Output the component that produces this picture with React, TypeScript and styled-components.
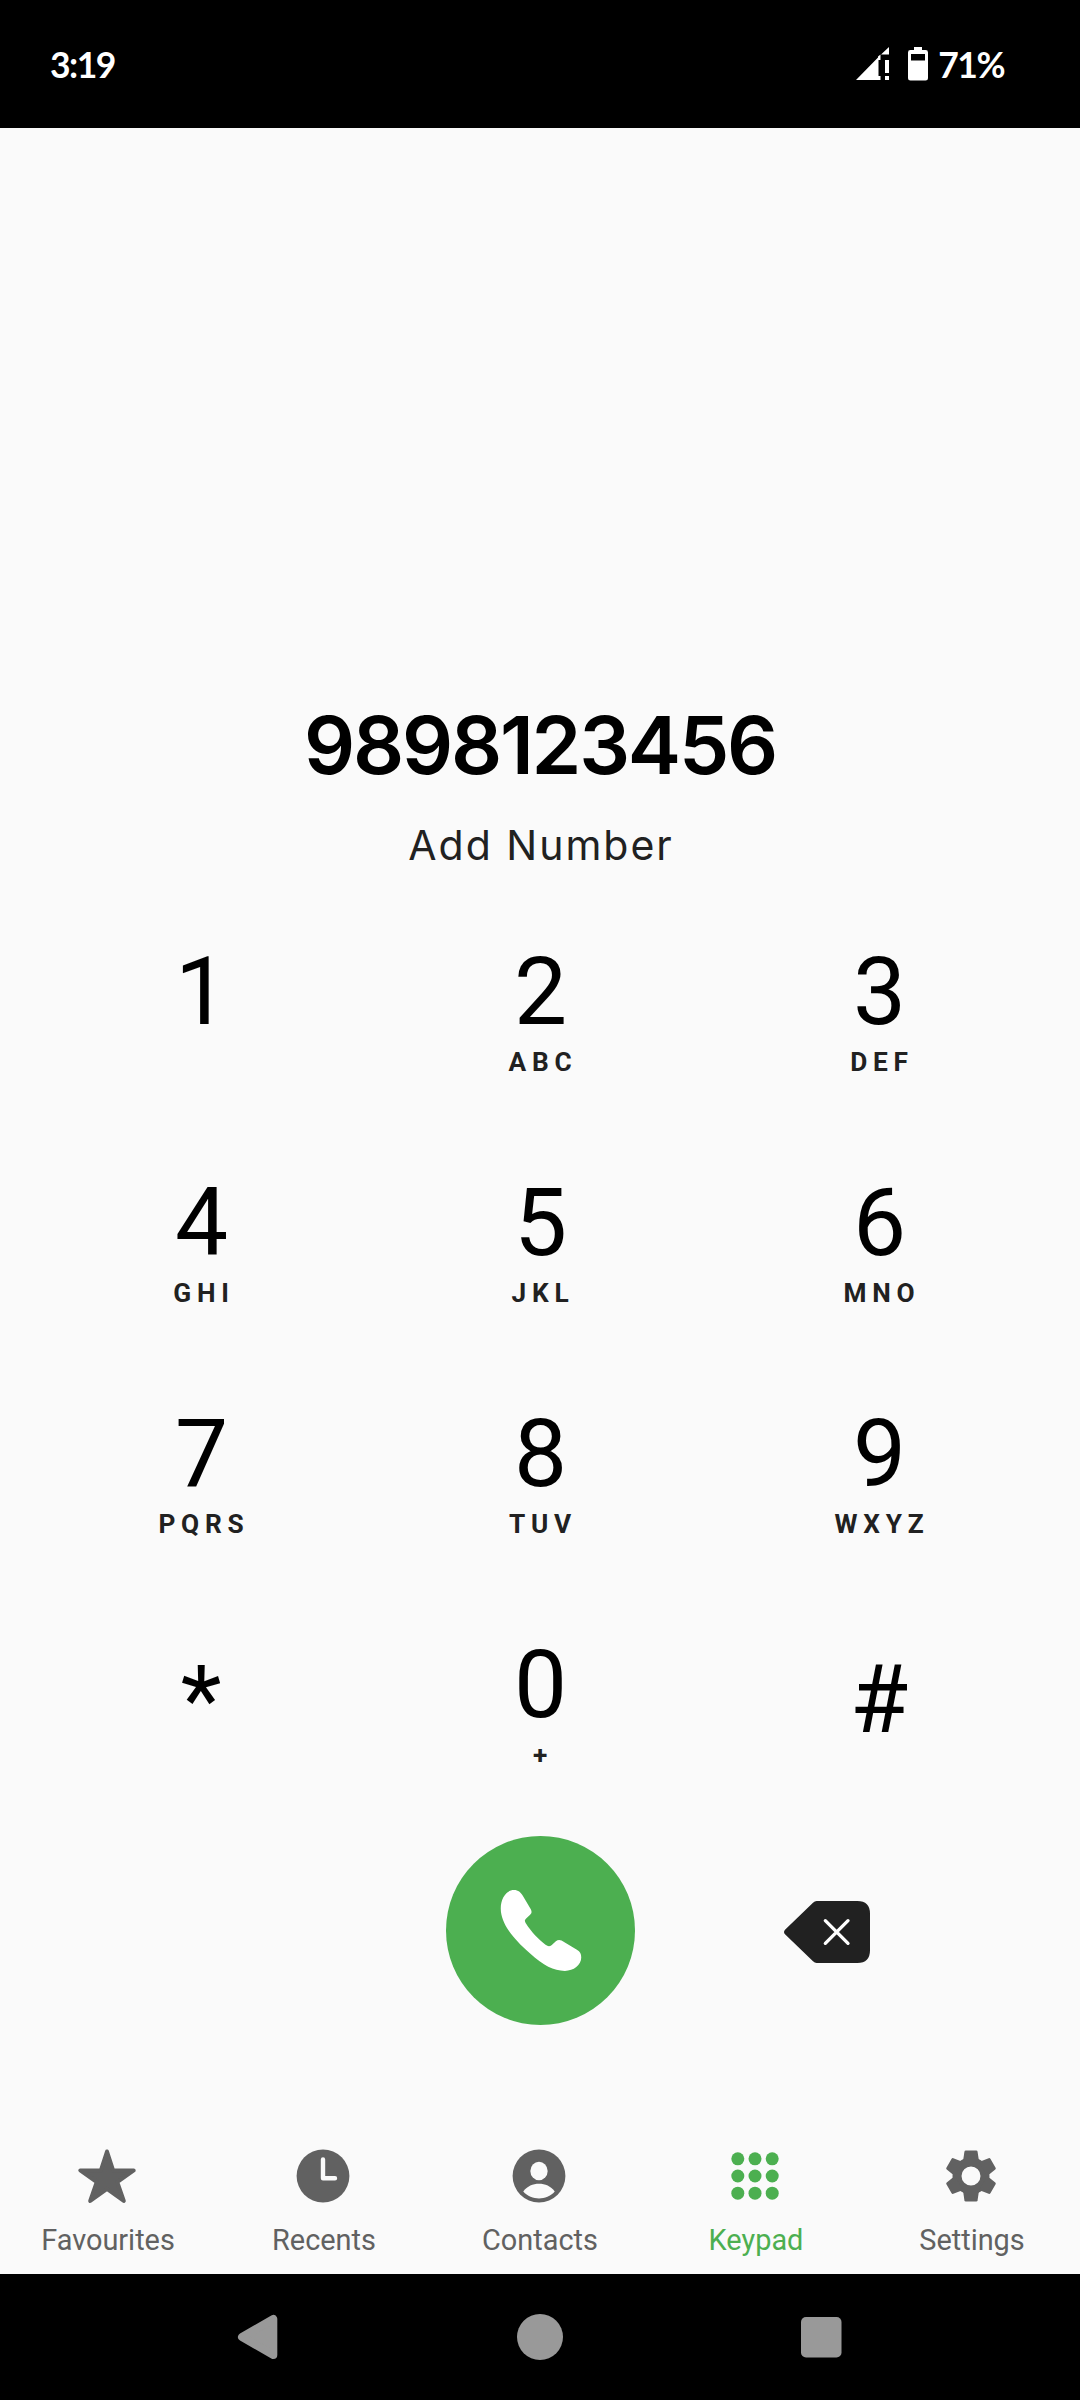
import React from "react";
import styled, { createGlobalStyle } from "styled-components";

const GlobalStyle = createGlobalStyle`
  *, *::before, *::after { box-sizing: border-box; }
  body { margin: 0; background: #fafafa; }
  button { border: 0; padding: 0; background: none; font: inherit; color: inherit; cursor: pointer; }
  svg { display: block; flex: none; }
`;

const Phone = styled.div`
  width: 1080px;
  height: 2400px;
  display: flex;
  flex-direction: column;
  background: #fafafa;
  font-family: Roboto, "Noto Sans", sans-serif;
  overflow: hidden;
`;

const StatusBar = styled.header`
  height: 128px;
  flex: none;
  display: flex;
  align-items: center;
  justify-content: space-between;
  padding: 0 76px 0 50px;
  background: #000;
  color: #fff;
  font-family: Lato, sans-serif;
  font-weight: 700;
  font-size: 35.5px;
  line-height: 44px;
  letter-spacing: -1.5px;
`;

const StatusText = styled.span`
  padding-top: 1px;
`;

const StatusIcons = styled.div`
  display: flex;
  align-items: center;
`;

const SignalIcon = styled.svg`
  margin-right: 19px;
`;

const BatteryIcon = styled.svg`
  margin-right: 10px;
`;

const Dialer = styled.main`
  flex: 1;
  display: flex;
  flex-direction: column;
`;

const Entry = styled.section`
  height: 808px;
  flex: none;
  display: flex;
  flex-direction: column;
  align-items: center;
  justify-content: flex-end;
  padding-bottom: 66px;
  font-family: Inter, sans-serif;
`;

const DialedNumber = styled.div`
  color: #000;
  font-weight: 600;
  font-size: 80px;
  line-height: 100px;
  letter-spacing: -2.2px;
  white-space: nowrap;
`;

const AddNumber = styled.button`
  margin-top: 25px;
  color: #212121;
  font-size: 41px;
  line-height: 50px;
  letter-spacing: 2px;
  margin-right: -2px;
  white-space: nowrap;
`;

const Pad = styled.section`
  display: grid;
  grid-template-columns: repeat(3, 339px);
  grid-auto-rows: 142px;
  row-gap: 89px;
  justify-content: center;
`;

const Key = styled.button<{ $symbol?: boolean }>`
  display: flex;
  flex-direction: column;
  align-items: center;
  padding-top: ${(p) => (p.$symbol ? 15 : 0)}px;
  padding-left: ${(p) => (p.$symbol ? 0 : 1)}px;
`;

const Digit = styled.span`
  color: #000;
  font-size: 94.5px;
  line-height: 111px;
`;

const Letters = styled.span`
  color: #212121;
  font-weight: 700;
  font-size: 26.25px;
  line-height: 31px;
  letter-spacing: 5.8px;
  margin-right: -5px;
`;

const Actions = styled.section`
  display: grid;
  grid-template-columns: 1fr 189px 1fr;
  align-items: center;
  margin-top: 65px;
`;

const CallButton = styled.button`
  grid-column: 2;
  width: 189px;
  height: 189px;
  border-radius: 50%;
  background: #4caf50;
`;

const DeleteButton = styled.button`
  justify-self: start;
  margin: 3px 0 0 149px;
`;

const Tabs = styled.nav`
  flex: none;
  height: 146px;
  display: grid;
  grid-template-columns: repeat(5, 1fr);
`;

const Tab = styled.button<{ $active?: boolean }>`
  display: flex;
  flex-direction: column;
  align-items: center;
  padding-top: 16px;
  color: ${(p) => (p.$active ? "#4caf50" : "#616161")};

  svg {
    margin-right: 1.5px;
  }
`;

const TabLabel = styled.span`
  margin-top: 15px;
  font-size: 28.9px;
  line-height: 34px;
`;

const SystemNav = styled.footer`
  flex: none;
  height: 126px;
  display: flex;
  align-items: center;
  justify-content: space-between;
  padding: 0 238px 0 237px;
  background: #000;
`;

const keys = [
  { digit: "1", letters: "" },
  { digit: "2", letters: "ABC" },
  { digit: "3", letters: "DEF" },
  { digit: "4", letters: "GHI" },
  { digit: "5", letters: "JKL" },
  { digit: "6", letters: "MNO" },
  { digit: "7", letters: "PQRS" },
  { digit: "8", letters: "TUV" },
  { digit: "9", letters: "WXYZ" },
  { digit: "*", letters: "", symbol: true },
  { digit: "0", letters: "+" },
  { digit: "#", letters: "", symbol: true },
];

const StarIcon = () => (
  <svg width="64" height="64" viewBox="-32 -32 64 64" fill="currentColor" stroke="currentColor" strokeWidth="4" strokeLinejoin="round">
    <path d="M0 -24.5 L6.1 -5.6 H26.7 L10.2 6 L16.8 25 L0 12.8 L-16.8 25 L-10.2 6 L-26.7 -5.6 H-6.1 Z" />
  </svg>
);

const ClockIcon = () => (
  <svg width="64" height="64" viewBox="-32 -32 64 64">
    <circle r="26.4" fill="currentColor" />
    <path d="M0 -16.5 V2.3 H12" fill="none" stroke="#fafafa" strokeWidth="4.4" strokeLinecap="round" strokeLinejoin="round" />
  </svg>
);

const PersonIcon = () => (
  <svg width="64" height="64" viewBox="0 0 24 24">
    <circle cx="12" cy="12" r="9.9" fill="currentColor" />
    <ellipse cx="12" cy="10.1" rx="3.25" ry="3.45" fill="#fafafa" />
    <path
      fill="#fafafa"
      d="M6.1 17.8C7.6 15.8 9.7 14.9 12 14.9S16.4 15.8 17.9 17.8C16.4 19.6 14.1 20.4 12 20.4S7.6 19.6 6.1 17.8Z"
    />
  </svg>
);

const KeypadIcon = () => (
  <svg width="64" height="64" viewBox="-32 -32 64 64" fill="currentColor">
    {[-17.2, 0, 17.2].map((y) =>
      [-17.2, 0, 17.2].map((x) => <circle key={`${x}:${y}`} cx={x} cy={y} r="6.5" />)
    )}
  </svg>
);

const GearIcon = () => (
  <svg width="64" height="64" viewBox="-32 -32 64 64" fill="currentColor">
    <circle r="14" fill="none" stroke="currentColor" strokeWidth="9" />
    {[0, 60, 120, 180, 240, 300].map((angle) => (
      <path
        key={angle}
        transform={`rotate(${angle})`}
        d="M-5.2 -25.4 H5.2 Q6.4 -25.4 6.6 -24.2 L7.5 -18 L8 -14 H-8 L-7.5 -18 L-6.6 -24.2 Q-6.4 -25.4 -5.2 -25.4 Z"
      />
    ))}
  </svg>
);

const tabs = [
  { label: "Favourites", Icon: StarIcon },
  { label: "Recents", Icon: ClockIcon },
  { label: "Contacts", Icon: PersonIcon },
  { label: "Keypad", Icon: KeypadIcon, active: true },
  { label: "Settings", Icon: GearIcon },
];

export default function App() {
  return (
    <Phone>
      <GlobalStyle />
      <StatusBar>
        <StatusText>3:19</StatusText>
        <StatusIcons>
          <SignalIcon width="33" height="34" viewBox="0 0 33 34" fill="#fff">
            <path d="M0 33 L22.5 10 V33 Z M25 7.5 L33 0 V7.5 Z" />
            <path d="M29 13h4v13h-4z M29 29h4v4h-4z M22 29h2.5v4H22z M22 9.5 L24.5 7.5 V13 H22z" />
          </SignalIcon>
          <BatteryIcon width="20" height="34" viewBox="0 0 20 34">
            <path
              fillRule="evenodd"
              fill="#fff"
              d="M6 0H14V3H17.6Q20 3 20 5.4V31.2Q20 33.6 17.6 33.6H2.4Q0 33.6 0 31.2V5.4Q0 3 2.4 3H6Z M3 7V13.5H17V7Z"
            />
          </BatteryIcon>
          <StatusText>71%</StatusText>
        </StatusIcons>
      </StatusBar>

      <Dialer>
        <Entry>
          <DialedNumber>9898123456</DialedNumber>
          <AddNumber>Add Number</AddNumber>
        </Entry>

        <Pad>
          {keys.map((key) => (
            <Key key={key.digit} $symbol={key.symbol}>
              <Digit>{key.digit}</Digit>
              {key.letters && <Letters>{key.letters}</Letters>}
            </Key>
          ))}
        </Pad>

        <Actions>
          <CallButton aria-label="Call">
            <svg width="189" height="189" viewBox="48 48 566 566">
              <path
                fill="#fff"
                d="M212 265 C212 235 228 210 252 210 C264 210 272 217 278 227 L302 267 C306 275 304 280 300 284 L288 295 C282 301 284 304 288 311 C303 335 325 357 346 374 C353 379 358 380 364 375 L377 363 C382 359 388 358 394 361 L440 389 C450 395 453 402 453 412 C453 435 430 452 404 452 C370 452 340 436 300 400 C270 373 252 354 235 330 C222 311 212 288 212 265 Z"
              />
            </svg>
          </CallButton>
          <DeleteButton aria-label="Delete">
            <svg width="86" height="62" viewBox="72 93 258 186">
              <path
                fill="#212121"
                d="M170 93 H292 Q330 93 330 131 V241 Q330 279 292 279 H170 Q164 279 159 274 L75 193 Q69 186 75 179 L159 98 Q164 93 170 93 Z"
              />
              <path d="M196 152 L264 220 M264 152 L196 220" stroke="#fff" strokeWidth="10" strokeLinecap="round" />
            </svg>
          </DeleteButton>
        </Actions>
      </Dialer>

      <Tabs>
        {tabs.map(({ label, Icon, active }) => (
          <Tab key={label} $active={active}>
            <Icon />
            <TabLabel>{label}</TabLabel>
          </Tab>
        ))}
      </Tabs>

      <SystemNav>
        <svg width="41" height="46" viewBox="0 0 41 46">
          <path fill="#999" stroke="#999" strokeWidth="8" strokeLinejoin="round" d="M36.3 5 V41 L5 23 Z" />
        </svg>
        <svg width="46" height="46" viewBox="0 0 46 46">
          <circle cx="23" cy="23" r="23" fill="#999" />
        </svg>
        <svg width="41" height="41" viewBox="0 0 41 41">
          <rect width="40.5" height="40.5" rx="5" fill="#999" />
        </svg>
      </SystemNav>
    </Phone>
  );
}
